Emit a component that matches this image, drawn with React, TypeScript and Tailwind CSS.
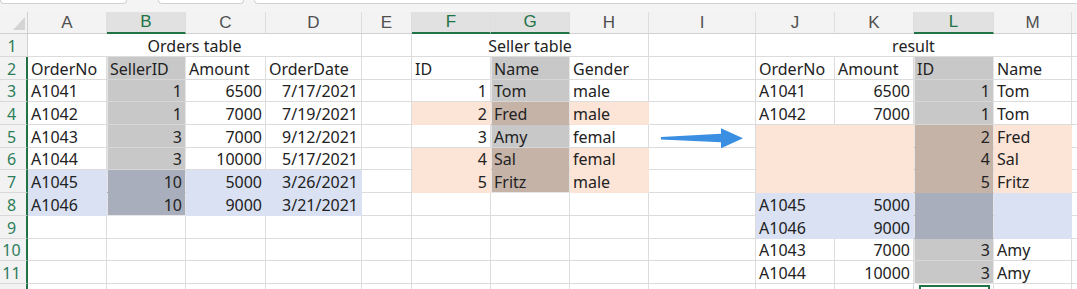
import clsx from 'clsx';

type Fill = 'none' | 'peach' | 'blue';

const COL_LETTERS = ['A', 'B', 'C', 'D', 'E', 'F', 'G', 'H', 'I', 'J', 'K', 'L', 'M', ''];
const SELECTED_HEADERS = ['B', 'F', 'G', 'L'];

// selected ranges per column index: [firstRow, lastRow]
const SELECTION: Record<number, [number, number]> = { 1: [2, 8], 6: [2, 7], 11: [2, 11] };

const E = '';
const DATA: Record<number, string[]> = {
  2: ['OrderNo', 'SellerID', 'Amount', 'OrderDate', E, 'ID', 'Name', 'Gender', E, 'OrderNo', 'Amount', 'ID', 'Name', E],
  3: ['A1041', '1', '6500', '7/17/2021', E, '1', 'Tom', 'male', E, 'A1041', '6500', '1', 'Tom', E],
  4: ['A1042', '1', '7000', '7/19/2021', E, '2', 'Fred', 'male', E, 'A1042', '7000', '1', 'Tom', E],
  5: ['A1043', '3', '7000', '9/12/2021', E, '3', 'Amy', 'femal', E, E, E, '2', 'Fred', E],
  6: ['A1044', '3', '10000', '5/17/2021', E, '4', 'Sal', 'femal', E, E, E, '4', 'Sal', E],
  7: ['A1045', '10', '5000', '3/26/2021', E, '5', 'Fritz', 'male', E, E, E, '5', 'Fritz', E],
  8: ['A1046', '10', '9000', '3/21/2021', E, E, E, E, E, 'A1045', '5000', E, E, E],
  9: [E, E, E, E, E, E, E, E, E, 'A1046', '9000', E, E, E],
  10: [E, E, E, E, E, E, E, E, E, 'A1043', '7000', '3', 'Amy', E],
  11: [E, E, E, E, E, E, E, E, E, 'A1044', '10000', '3', 'Amy', E],
  12: [E, E, E, E, E, E, E, E, E, E, E, E, E, E],
};

function fillAt(row: number, col: number): Fill {
  if ((row === 4 || row === 6 || row === 7) && col >= 5 && col <= 7) return 'peach';
  if (row >= 5 && row <= 7 && col >= 9 && col <= 12) return 'peach';
  if ((row === 7 || row === 8) && col <= 3) return 'blue';
  if ((row === 8 || row === 9) && col >= 9 && col <= 12) return 'blue';
  return 'none';
}

function isSelected(row: number, col: number) {
  const range = SELECTION[col];
  return !!range && row >= range[0] && row <= range[1];
}

const BG: Record<Fill, string> = {
  none: 'bg-white border-r-[#dcdcdc]',
  peach: 'bg-[#fce4d6] border-r-[#fce4d6]',
  blue: 'bg-[#d9e1f2] border-r-[#d9e1f2]',
};
const BOTTOM: Record<Fill, string> = {
  none: 'border-b-[#dcdcdc]',
  peach: 'border-b-[#fce4d6]',
  blue: 'border-b-[#d9e1f2]',
};
const SEL_BG: Record<Fill, string> = {
  none: 'bg-[#c8c8c8] border-r-[#e6e6e6] shadow-[inset_1px_0_0_#e6e6e6]',
  peach: 'bg-[#c5b3a8] border-r-[#e6e6e6] shadow-[inset_1px_0_0_#e6e6e6]',
  blue: 'bg-[#a8aebb] border-r-[#e6e6e6] shadow-[inset_1px_0_0_#e6e6e6]',
};
const SEL_BOTTOM: Record<Fill, string> = {
  none: 'border-b-[#d6d6d6]',
  peach: 'border-b-[#c5b3a8]',
  blue: 'border-b-[#a8aebb]',
};

function Arrow() {
  return (
    <svg width="107" height="22" viewBox="0 0 107 22" className="block overflow-visible">
      <polygon
        points="12,12 72,8.8 72,3.3 94,13.3 72,23.3 72,17.2 12,14.6"
        fill="#3a8fe2"
      />
    </svg>
  );
}

function DataCell({ row, col, value }: { row: number; col: number; value: string }) {
  const fill = fillAt(row, col);
  const sel = isSelected(row, col);
  const lastSel = sel && SELECTION[col][1] === row;
  const right = /^[\d/]+$/.test(value);

  if (row === 5 && col === 8) {
    return (
      <div className="border-r border-b border-[#dcdcdc] bg-white">
        <Arrow />
      </div>
    );
  }

  return (
    <div
      className={clsx(
        'flex items-end overflow-hidden whitespace-nowrap border-r border-b px-[3px] text-[16px] leading-[20px] text-[#222]',
        right && 'justify-end',
        sel ? SEL_BG[fill] : BG[fill],
        lastSel ? 'border-b-[#e6e6e6]' : sel ? SEL_BOTTOM[fill] : BOTTOM[fill]
      )}
    >
      {row === 12 && col === 11 ? (
        <div className="mb-auto ml-[2px] mt-[1px] h-[20px] w-full border-2 border-[#217346]" />
      ) : (
        value
      )}
    </div>
  );
}

function TitleRow() {
  const title = 'flex items-end justify-center border-r border-b border-[#dcdcdc] bg-white text-[16px] leading-[20px] text-[#222]';
  const blank = 'border-r border-b border-[#dcdcdc] bg-white';
  return (
    <>
      <div className={clsx(title, 'col-span-4')}>Orders table</div>
      <div className={blank} />
      <div className={clsx(title, 'col-span-3')}>Seller table</div>
      <div className={blank} />
      <div className={clsx(title, 'col-span-4')}>result</div>
      <div className={blank} />
    </>
  );
}

export default function App() {
  const rows = Array.from({ length: 12 }, (_, i) => i + 1);

  return (
    <div className="h-[289px] w-[1077px] overflow-hidden bg-white font-['Noto_Sans',sans-serif]">
      {/* formula bar remains */}
      <div className="flex h-[12px] items-start bg-[#f4f4f4]">
        <div className="h-[4px] w-[127px] rounded-b-[4px] border border-t-0 border-[#d2d2d2] bg-white" />
        <div className="ml-[31px] h-[4px] w-[86px] rounded-b-[4px] border border-t-0 border-[#d2d2d2] bg-white" />
        <div className="ml-[10px] h-[4px] flex-1 rounded-bl-[4px] border border-t-0 border-r-0 border-[#d2d2d2] bg-white" />
      </div>

      <div className="grid grid-cols-[28px_79px_79px_80px_96px_50px_79px_79px_79px_107px_79px_79px_80px_78px_1fr] grid-rows-[22px_23px_23px_22px_23px_23px_22px_23px_23px_23px_22px_23px_23px]">
        <div className="border-r border-b border-[#d0d0d0] bg-[#f3f3f3]">
          <svg width="28" height="22" viewBox="0 0 28 22" className="block">
            <polygon points="13,18 25,18 25,5" fill="#d4d4d4" />
          </svg>
        </div>
        {COL_LETTERS.map((letter, i) => {
          const sel = SELECTED_HEADERS.includes(letter);
          return (
            <div
              key={i}
              className={clsx(
                "flex items-center justify-center border-r border-r-[#dedede] font-['Liberation_Sans_Narrow','Liberation_Sans',sans-serif] text-[17px]",
                sel
                  ? 'border-b-2 border-b-[#217346] bg-[#e1e1e1] text-[#217346]'
                  : 'border-b border-b-[#d0d0d0] bg-[#f3f3f3] text-[#505050]'
              )}
            >
              {letter}
            </div>
          );
        })}

        {rows.map((row) => (
          <div key={row} className="contents">
            <div
              className={clsx(
                'flex items-end justify-center border-b border-b-[#d8d8d8] bg-[#f2f2f2] pr-[3px] text-[16px] leading-[20px] text-[#2e7d5b]',
                row === 1 ? 'border-r border-r-[#d0d0d0]' : 'border-r-2 border-r-[#217346]'
              )}
            >
              {row < 12 ? row : ''}
            </div>
            {row === 1 ? (
              <TitleRow />
            ) : (
              DATA[row].map((value, col) => <DataCell key={col} row={row} col={col} value={value} />)
            )}
          </div>
        ))}
      </div>
    </div>
  );
}
